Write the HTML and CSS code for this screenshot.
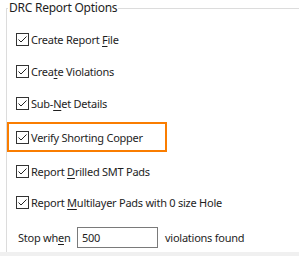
FILE: index.html
```html
<!doctype html>
<html lang="en">
<head>
    <meta charset="UTF-8">
    <title>DRC Report Options</title>
    <link rel="stylesheet" href="styles.css">
</head>
<body>
    <fieldset class="group">
        <legend>DRC Report Options</legend>
        <div class="opts">
            <label class="opt r1"><span class="box"><svg viewBox="0 0 11 11"><polyline points="1.5,5.5 4,8 9.5,2.5"/></svg></span><span>Create Report <u>F</u>ile</span></label>
            <label class="opt r2"><span class="box"><svg viewBox="0 0 11 11"><polyline points="1.5,5.5 4,8 9.5,2.5"/></svg></span><span>Crea<u>t</u>e Violations</span></label>
            <label class="opt r3"><span class="box"><svg viewBox="0 0 11 11"><polyline points="1.5,5.5 4,8 9.5,2.5"/></svg></span><span>Sub-<u>N</u>et Details</span></label>
            <label class="opt hl"><span class="box"><svg viewBox="0 0 11 11"><polyline points="1.5,5.5 4,8 9.5,2.5"/></svg></span><span>Verify Shorting Copper</span></label>
            <label class="opt r5"><span class="box"><svg viewBox="0 0 11 11"><polyline points="1.5,5.5 4,8 9.5,2.5"/></svg></span><span>Report <u>D</u>rilled SMT Pads</span></label>
            <label class="opt r6"><span class="box"><svg viewBox="0 0 11 11"><polyline points="1.5,5.5 4,8 9.5,2.5"/></svg></span><span>Report <u>M</u>ultilayer Pads with 0 size Hole</span></label>
            <div class="stop">
                <span class="lbl">Stop wh<u>e</u>n</span>
                <span class="num">500</span>
                <span>violations found</span>
            </div>
        </div>
    </fieldset>
    <div class="foot"></div>
</body>
</html>
```

FILE: styles.css
```css
*{
    margin:0;
    padding:0;
    box-sizing:border-box;
}
body{
    width:299px;
    height:256px;
    background:#fff;
    font-family:"Noto Sans","Open Sans",sans-serif;
    font-size:11px;
    letter-spacing:-0.25px;
    color:#1e1e1e;
    overflow:hidden;
}
u{
    text-decoration-thickness:1px;
    text-underline-offset:2px;
}
.group{
    margin:0 0 0 6px;
    height:252px;
    border:1px solid #dcdcdc;
    border-right:0;
    border-bottom:0;
}
.group legend{
    margin-left:1px;
    padding:0 1px;
    font-size:12px;
    line-height:16px;
}
.opts{
    display:flex;
    flex-direction:column;
    padding:8px 0 0 9px;
}
.opt{
    display:flex;
    align-items:center;
    gap:2px;
    height:31px;
}
.r2,.r3{
    margin-top:1px;
}
.opt.hl{
    margin:3px 0 4px -9px;
    padding-left:7px;
    width:160px;
    height:30px;
    border:2px solid #fa7d00;
}
.box{
    width:13px;
    height:13px;
    border:1px solid #333;
    background:#fff;
    display:flex;
    align-items:center;
    justify-content:center;
}
.box svg{
    width:11px;
    height:11px;
    fill:none;
    stroke:#222;
    stroke-width:1;
}
.stop{
    display:flex;
    align-items:center;
    height:34px;
    margin-top:2px;
}
.stop .lbl{
    width:61px;
    padding-left:2px;
}
.num{
    width:81px;
    height:21px;
    border:1px solid #7a7a7a;
    padding:2px 4px;
    line-height:15px;
    margin-right:7px;
}
.foot{
    height:4px;
    background:#f0f0f0;
}
```
